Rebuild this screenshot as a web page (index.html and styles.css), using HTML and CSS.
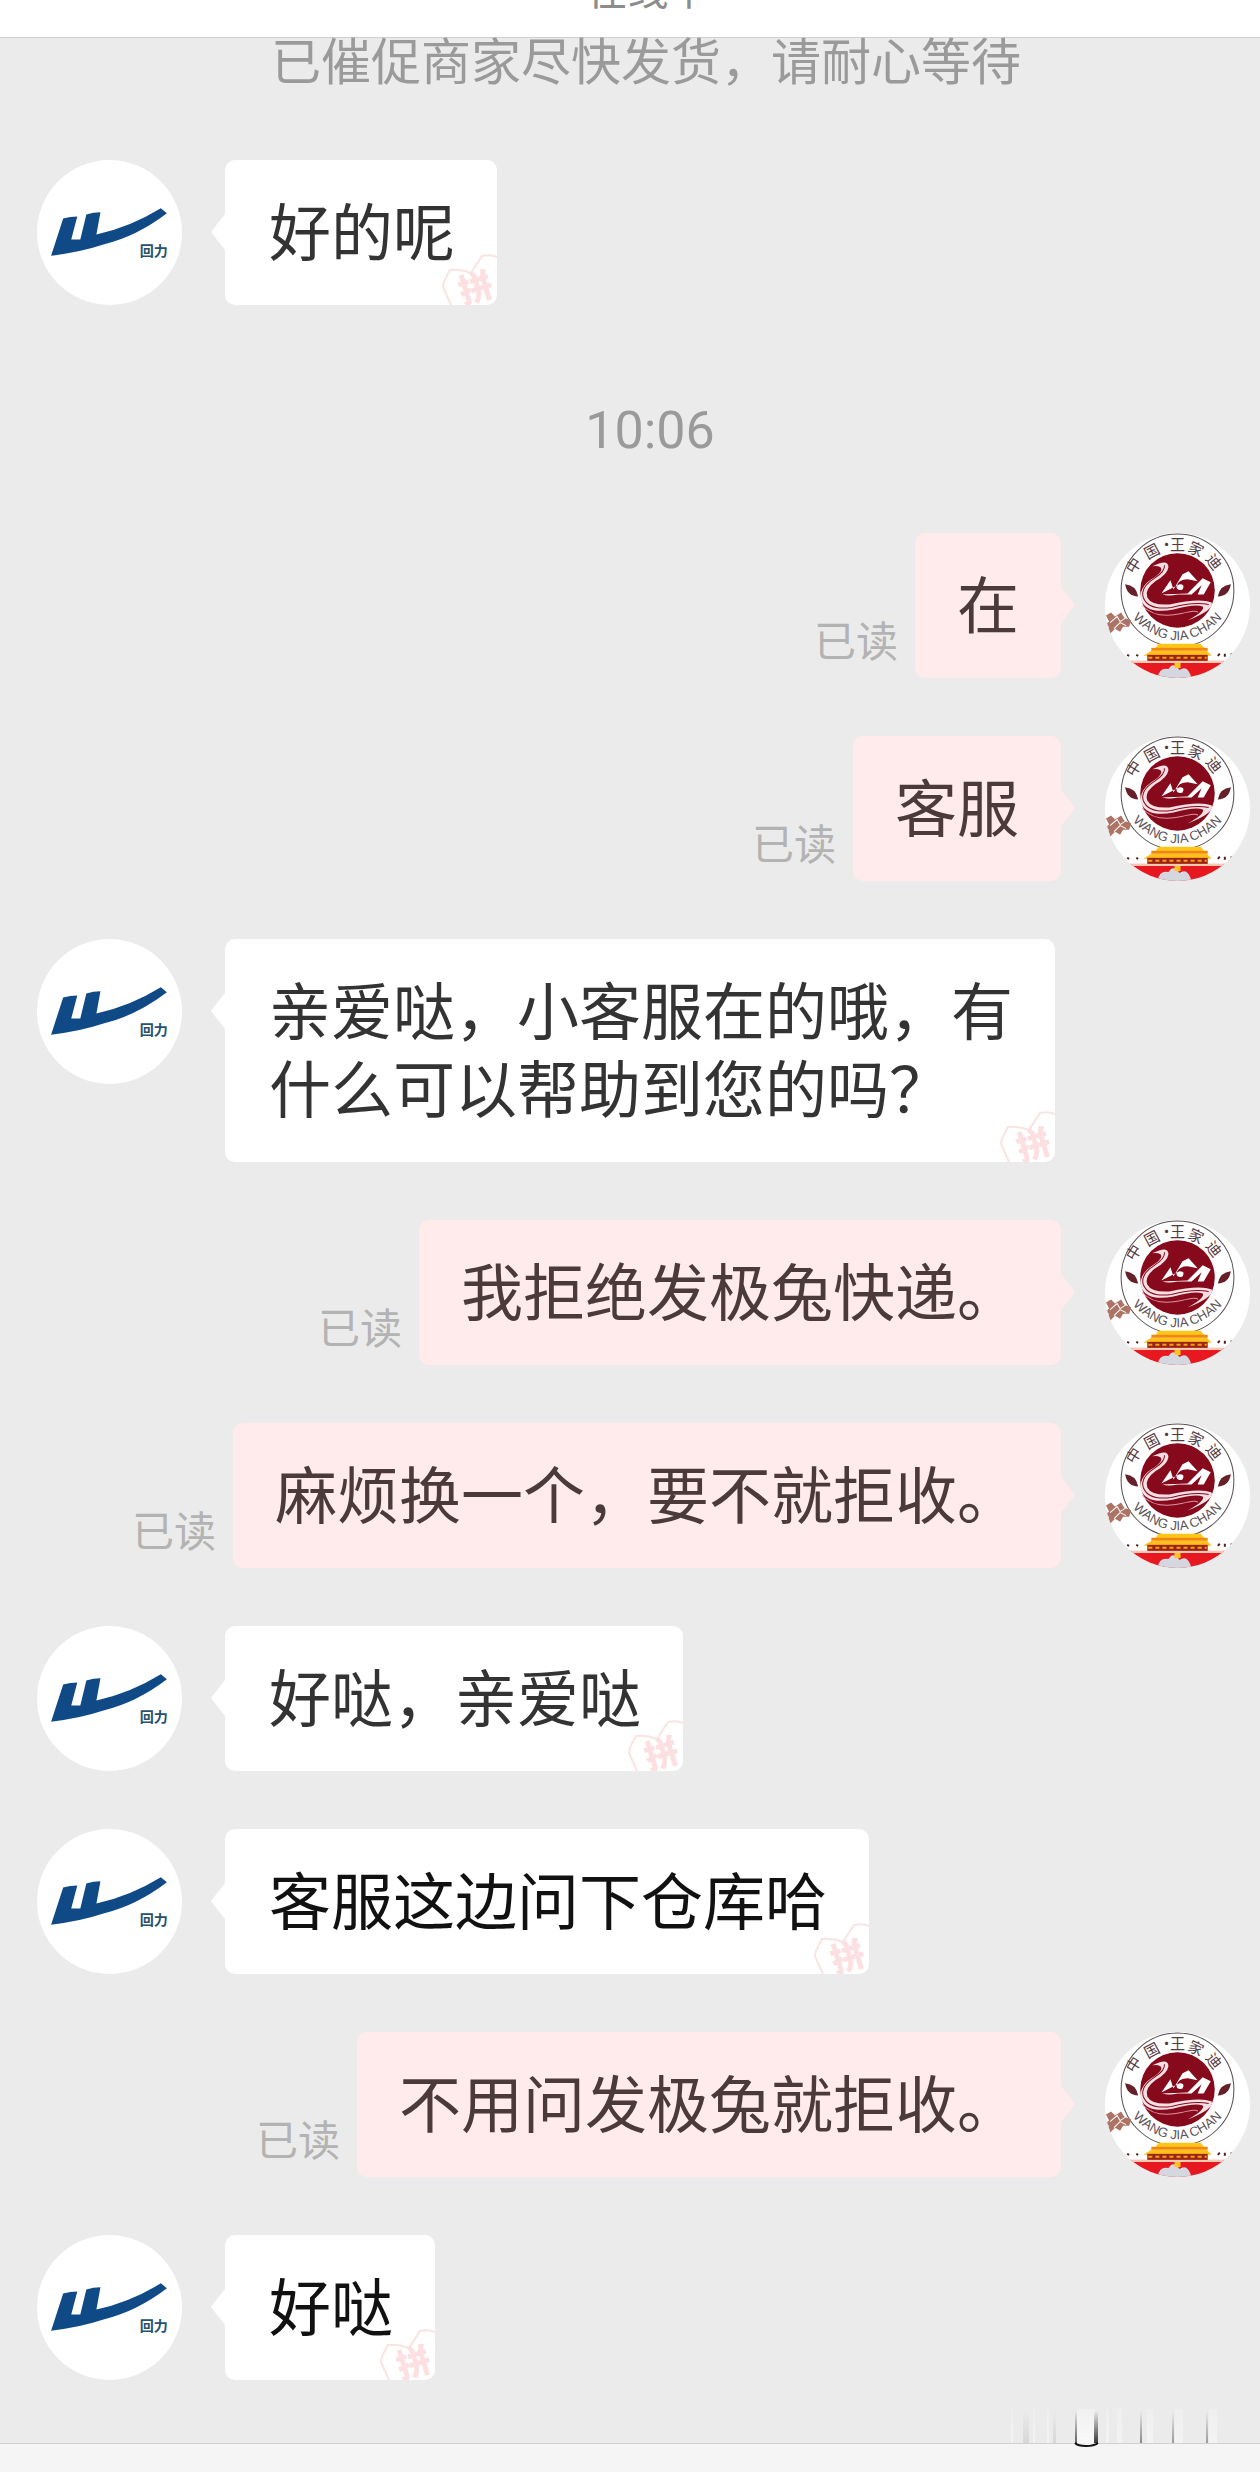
FILE: index.html
```
<!doctype html>
<html lang="zh-CN">
<head>
<meta charset="utf-8">
<title>客服聊天</title>
<meta name="viewport" content="width=device-width">
<link rel="stylesheet" href="styles.css">
</head>

<body>
<!-- shared drawings -->
<svg class="defs" aria-hidden="true">
<symbol id="shop" viewBox="0 0 144 144">
	<circle cx="72" cy="72" r="72" fill="#fff"/>
	<path d="M14 95 L26 58 Q33 56 40 56 L34 79 L43 79 L49 54 Q56 52 63 52 L59 74 Q92 67 123 48 L129 53 Q99 76 66 84 Q42 92 14 95Z" fill="#0f4a87"/>
	<text x="102" y="95" class="shop_name">回力</text>
</symbol>
<symbol id="buyer" viewBox="0 0 144 144">
	<clipPath id="round"><circle cx="72" cy="72" r="72"/></clipPath>
	<g clip-path="url(#round)">
		<rect width="144" height="144" fill="#fff"/>
		<circle cx="72" cy="57" r="56" fill="#fff" stroke="#574c50" stroke-width="1"/>
		<circle cx="72" cy="57" r="37" fill="#860a1c"/>
		<!-- river -->
		<path d="M47 33 Q63 25 63 34 Q62 41 50 48 Q39 56 42 64 Q46 72 64 71 Q94 64 106 69 Q109 76 82 87 Q100 77 97 73 Q90 70 68 76 Q42 81 36 67 Q33 55 46 46 Q59 38 55 34 Q52 32 47 33Z" fill="#f5dfe3"/>
		<path d="M59 32 Q60 38 49 45 Q35 54 38 64 Q43 77 66 74 Q88 68 103 71" fill="none" stroke="#860a1c" stroke-width="1"/>
		<path d="M37 72 Q50 86 76 80 Q92 76 92 79" fill="none" stroke="#d993a1" stroke-width="1"/>
		<!-- hills -->
		<path d="M56 60 L65 47 L68 56 L77 41 L83 38 L92 48 L82 46 Q73 46 71 53 Q71 58 77 56 Q80 51 74 51 M82 60 L97 45 L105 49 L98 61 L92 61 L96 52 L86 61 L72 61 Q63 63 57 61Z" fill="#fff"/>
		<path d="M20 51 Q31 52 33 63 Q22 63 20 51Z M125 51 Q114 52 112 63 Q123 63 125 51Z" fill="#66202a"/>
		<g class="seal_text">
			<text transform="translate(33 35) rotate(-58)">中</text>
			<text transform="translate(49 23) rotate(-28)">国</text>
			<text transform="translate(61 17)">·</text>
			<text transform="translate(72 17)">王</text>
			<text transform="translate(88 21) rotate(26)">家</text>
			<text transform="translate(104 32) rotate(52)">迪</text>
		</g>
		<path id="arc" d="M25 82 Q72 131 119 82" fill="none"/>
		<text class="seal_latin"><textPath href="#arc" startOffset="50%">WANG JIA CHAN</textPath></text>
		<path d="M1 82 l5 -3 4 4 6 -4 3 5 7 3 -2 6 -6 0 -3 5 -5 -3 -5 5 -4 -1 3 -6 -4 -2 4 -3Z" fill="#ad7466"/>
		<path d="M5 89 l7 -6 3 5 6 -4 M9 95 l6 -6 6 3" fill="none" stroke="#fff" stroke-width="1"/>
		<!-- gate tower -->
		<path d="M49 116 Q52 112 53 110 H95 Q97 113 101 116Z" fill="#ffc61a"/>
		<rect x="46" y="114" width="56" height="3" fill="#f08712"/>
		<path d="M38 122 L46 117 H101 L106 122Z" fill="#ffc01b"/>
		<rect x="42" y="121" width="60" height="6" fill="#9c240f"/>
		<path d="M43 124 H101" stroke="#f0a020" stroke-width="2" stroke-dasharray="4 3"/>
		<rect x="20" y="127" width="106" height="17" fill="#e71820"/>
		<path d="M22 128 H122" stroke="#fac9b2" stroke-width="2"/>
		<path d="M52 144 Q54 133 63 135 Q68 127 74 136 Q82 130 86 144Z" fill="#d4d7df"/>
		<path d="M69 129 H75 V134 H69Z" fill="#ffc61a"/>
		<path d="M22 121 l2 1 M31 121 l2 1 M112 122 l2 -2 M119 123 v-3 M125 121 l1 -1" stroke="#502020" stroke-width="2"/>
	</g>
</symbol>
<symbol id="sticker" viewBox="0 0 56 54">
	<path d="M10 54 L2 36 Q2 31 9 19 Q20 18 30 22 L41 5 Q50 3 56 6" fill="none" stroke="#f8e4e3" stroke-width="2"/>
	<text x="18" y="49" class="sticker_text" transform="rotate(-17 36 37)">拼</text>
</symbol>
</svg>

<header class="topbar">在线中</header>

<main class="chat">
<p class="notice">已催促商家尽快发货，请耐心等待</p>

<div class="row shop">
	<svg class="avatar" role="img" aria-label="回力"><use href="#shop"/></svg>
	<p class="bubble">好的呢<svg class="sticker"><use href="#sticker"/></svg></p>
</div>

<time class="time">10:06</time>

<div class="row buyer">
	<svg class="avatar"><use href="#buyer"/></svg>
	<p class="bubble">在</p>
	<span class="read">已读</span>
</div>
<div class="row buyer">
	<svg class="avatar"><use href="#buyer"/></svg>
	<p class="bubble">客服</p>
	<span class="read">已读</span>
</div>
<div class="row shop">
	<svg class="avatar" role="img" aria-label="回力"><use href="#shop"/></svg>
	<p class="bubble">亲爱哒，小客服在的哦，有什么可以帮助到您的吗？<svg class="sticker"><use href="#sticker"/></svg></p>
</div>
<div class="row buyer">
	<svg class="avatar"><use href="#buyer"/></svg>
	<p class="bubble">我拒绝发极兔快递。</p>
	<span class="read">已读</span>
</div>
<div class="row buyer">
	<svg class="avatar"><use href="#buyer"/></svg>
	<p class="bubble">麻烦换一个，要不就拒收。</p>
	<span class="read">已读</span>
</div>
<div class="row shop">
	<svg class="avatar" role="img" aria-label="回力"><use href="#shop"/></svg>
	<p class="bubble">好哒，亲爱哒<svg class="sticker"><use href="#sticker"/></svg></p>
</div>
<div class="row shop">
	<svg class="avatar" role="img" aria-label="回力"><use href="#shop"/></svg>
	<p class="bubble fresh">客服这边问下仓库哈<svg class="sticker"><use href="#sticker"/></svg></p>
</div>
<div class="row buyer">
	<svg class="avatar"><use href="#buyer"/></svg>
	<p class="bubble">不用问发极兔就拒收。</p>
	<span class="read">已读</span>
</div>
<div class="row shop">
	<svg class="avatar" role="img" aria-label="回力"><use href="#shop"/></svg>
	<p class="bubble fresh">好哒<svg class="sticker"><use href="#sticker"/></svg></p>
</div>

<svg class="streaks" viewBox="0 0 240 40" aria-hidden="true">
	<defs>
	<linearGradient id="fade" x1="0" y1="0" x2="0" y2="1">
		<stop offset="0" stop-color="#222" stop-opacity="0"/>
		<stop offset="1" stop-color="#222"/>
	</linearGradient>
	<linearGradient id="glow" x1="0" y1="0" x2="0" y2="1">
		<stop offset="0" stop-color="#fff" stop-opacity=".3"/>
		<stop offset="1" stop-color="#fff" stop-opacity=".7"/>
	</linearGradient>
	</defs>
	<g fill="url(#glow)">
		<rect x="18" y="0" width="2" height="34" opacity=".6"/>
		<rect x="40" y="0" width="2" height="34" opacity=".6"/>
		<rect x="54" y="0" width="2" height="34" opacity=".6"/>
		<rect x="84" y="0" width="18" height="36"/>
		<rect x="113" y="0" width="3" height="34" opacity=".6"/>
		<rect x="124" y="0" width="5" height="34" opacity=".6"/>
		<rect x="154" y="0" width="6" height="34" opacity=".6"/>
		<rect x="182" y="0" width="8" height="34" opacity=".6"/>
		<rect x="216" y="0" width="8" height="34" opacity=".6"/>
	</g>
	<g fill="url(#fade)">
		<rect x="82" y="2" width="2" height="32" opacity=".7"/>
		<rect x="101" y="2" width="4" height="32" opacity=".9"/>
		<rect x="147" y="2" width="2" height="32" opacity=".5"/>
		<rect x="179" y="2" width="2" height="32" opacity=".4"/>
		<rect x="213" y="2" width="2" height="32" opacity=".4"/>
		<rect x="30" y="2" width="6" height="32" opacity=".1"/>
		<rect x="60" y="2" width="3" height="32" opacity=".1"/>
	</g>
	<path d="M82 34 Q85 37 93 37 Q101 37 105 34" fill="none" stroke="#111" stroke-width="2"/>
</svg>
</main>

<footer class="bottombar"></footer>
</body>
</html>
```

FILE: styles.css
```
	* {
		box-sizing: border-box;
	}
	body {
		margin: 0;
		min-height: 100vh;
		display: flex;
		flex-direction: column;
		background: #ebebeb;
		font-family: "Noto Sans CJK SC",sans-serif;
	}
	p {
		margin: 0;
	}
	.defs {
		position: absolute;
		width: 0;
		height: 0;
	}
	.topbar {
		height: 38px;
		background: #fff;
		border-bottom: 1px solid #cfcfcf;
		display: flex;
		justify-content: center;
		align-items: flex-end;
		padding: 0 0 28px 36px;
		overflow: hidden;
		font-size: 41px;
		line-height: 44px;
		color: #8c8c8c;
	}
	.chat {
		flex: 1;
		display: flex;
		flex-direction: column;
		gap: 58px;
		position: relative;
	}
	.notice {
		height: 64px;
		padding-left: 32px;
		text-align: center;
		font-size: 50px;
		line-height: 40px;
		color: #9a9a9a;
	}
	.time {
		padding: 48px 0 25px 40px;
		text-align: center;
		font-family: Roboto,sans-serif;
		font-size: 52px;
		line-height: 39px;
		color: #9a9a9a;
	}
	.row {
		display: flex;
		align-items: flex-start;
	}
	.shop {
		padding-left: 37px;
	}
	.buyer {
		flex-direction: row-reverse;
		padding-right: 10px;
	}
	.avatar {
		flex: none;
		width: 145px;
		height: 145px;
	}
	.bubble {
		position: relative;
		max-width: 830px;
		border-radius: 10px;
		padding: 30px 42px 37px;
		font-size: 62px;
		line-height: 78px;
	}
	.shop .bubble {
		margin-left: 43px;
		padding-left: 44px;
		background: #fff;
		color: #333;
	}
	.shop .fresh {
		color: #111;
	}
	.buyer .bubble {
		margin-right: 44px;
		background: #ffebeb;
		color: #4a3a3a;
	}
	/* tail of the bubble */
	.bubble::before {
		content: "";
		position: absolute;
		top: 54px;
		border: 18px solid transparent;
	}
	.shop .bubble::before {
		right: 100%;
		border-left-width: 0;
		border-right: 14px solid #fff;
	}
	.buyer .bubble::before {
		left: 100%;
		border-right-width: 0;
		border-left: 14px solid #ffebeb;
	}
	.sticker {
		position: absolute;
		right: 0;
		bottom: 0;
		width: 56px;
		height: 54px;
	}
	.sticker_text {
		font-size: 34px;
		font-weight: 900;
		fill: #fcdfe1;
	}
	.read {
		align-self: flex-end;
		padding: 0 17px 12px 0;
		font-size: 42px;
		line-height: 54px;
		color: #b3b3b3;
	}
	.shop_name {
		font-size: 14px;
		font-weight: 700;
		fill: #28506f;
	}
	.seal_text {
		font-family: "Noto Sans CJK SC",sans-serif;
		font-size: 15px;
		text-anchor: middle;
		fill: #55383e;
	}
	.seal_latin {
		font-family: "Liberation Sans",sans-serif;
		font-size: 13px;
		text-anchor: middle;
		fill: #5c5357;
	}
	.streaks {
		position: absolute;
		right: 27px;
		bottom: -6px;
		width: 240px;
		height: 40px;
	}
	.bottombar {
		height: 29px;
		background: #f5f5f5;
		border-top: 1px solid #d0d0d0;
	}
```
